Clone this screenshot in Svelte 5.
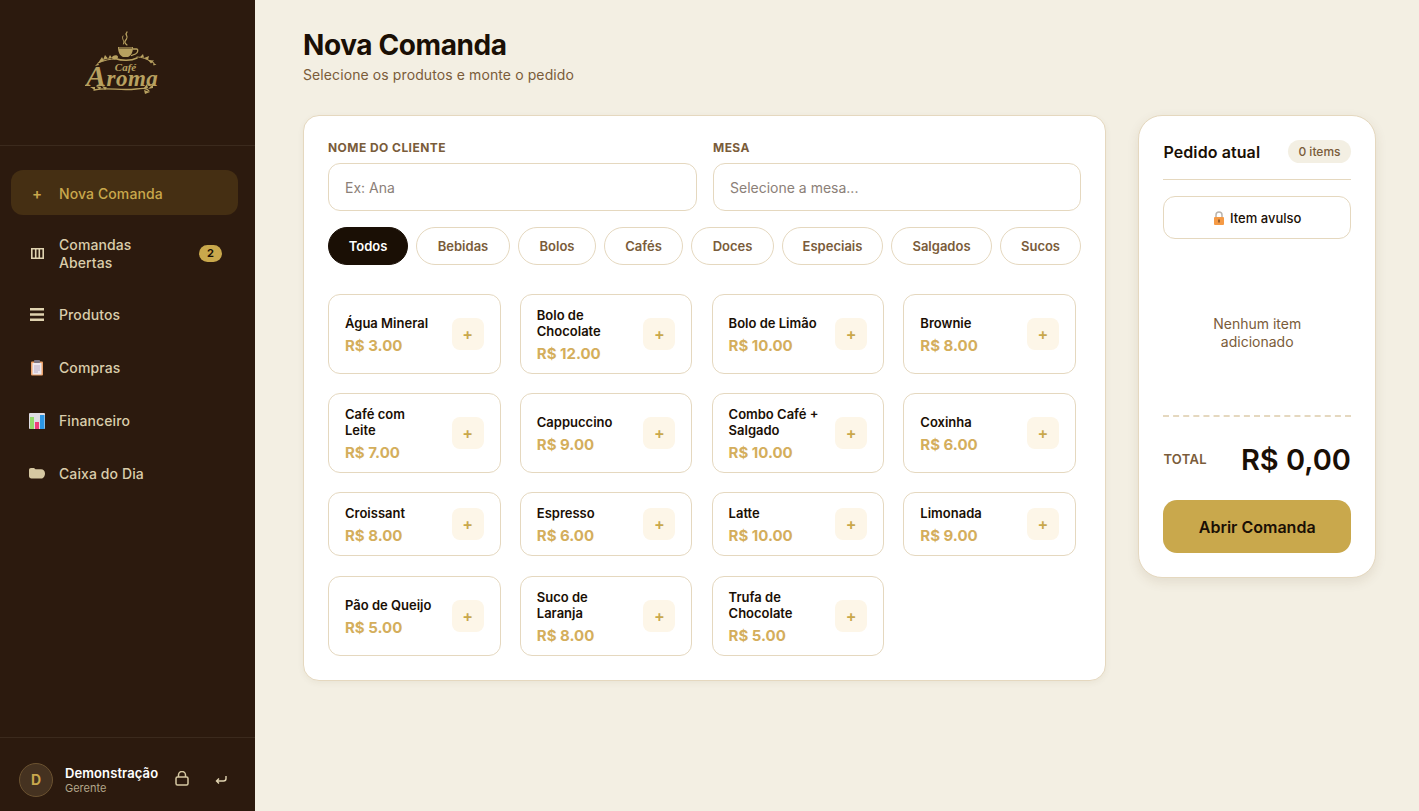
<script lang="ts">
  const nav = [
    { label: 'Comandas Abertas', icon: 'columns', badge: 2 },
    { label: 'Produtos', icon: 'lines' },
    { label: 'Compras', icon: 'clipboard' },
    { label: 'Financeiro', icon: 'chart' },
    { label: 'Caixa do Dia', icon: 'folder' },
  ];

  const chips = ['Todos', 'Bebidas', 'Bolos', 'Cafés', 'Doces', 'Especiais', 'Salgados', 'Sucos'];

  const products = [
    { name: 'Água Mineral', price: 'R$ 3.00' },
    { name: 'Bolo de Chocolate', price: 'R$ 12.00' },
    { name: 'Bolo de Limão', price: 'R$ 10.00' },
    { name: 'Brownie', price: 'R$ 8.00' },
    { name: 'Café com Leite', price: 'R$ 7.00' },
    { name: 'Cappuccino', price: 'R$ 9.00' },
    { name: 'Combo Café + Salgado', price: 'R$ 10.00' },
    { name: 'Coxinha', price: 'R$ 6.00' },
    { name: 'Croissant', price: 'R$ 8.00' },
    { name: 'Espresso', price: 'R$ 6.00' },
    { name: 'Latte', price: 'R$ 10.00' },
    { name: 'Limonada', price: 'R$ 9.00' },
    { name: 'Pão de Queijo', price: 'R$ 5.00' },
    { name: 'Suco de Laranja', price: 'R$ 8.00' },
    { name: 'Trufa de Chocolate', price: 'R$ 5.00' },
  ];
</script>

<div class="app">
  <aside class="sidebar">
    <div class="brand">
      <svg class="logo" viewBox="0 0 74 66" width="74" height="66" aria-label="Café Aroma">
        <g fill="none" stroke="#b8a160" stroke-linecap="round">
          <path d="M42 2c-3 3 2 4-.5 7s-2 4 .5 6" stroke-width="1.200" />
          <path d="M38 6c-2 3 2 4 .5 8" stroke-width="1" />
          <path d="M48 19h3.500c2 0 1.500 4-1 5l-4 1.500" stroke-width="1.300" />
          <path d="M30 28.500c7 2.500 16 2.500 22-.5" stroke-width="1.500" />
          <path d="M30 29c-5 0-10 1-17 4M52 27c5 0 10 2 17 6" stroke-width="1" />
          <path d="M9 60c14-3 26 1 42-1 8-1 11-1 13 2" stroke-width="1.300" />
        </g>
        <g fill="#b8a160">
          <path d="M33 17h15c0 6-2.500 9-5 10h-5c-2.500-1-5-4-5-10z" />
          <path d="M13 33l4-6 2 4zM18 30l2-5 3 3.500zM23 29l2-4 2 3zM63 30l6 .5-3 3zM59 28l5-2-1 4zM55 27l3-3 1 3.500zM68 33l3.500 1.500-3 1zM13 33l-3 3 4-1z" />
          <path d="M28 26c2-1.500 5-1 5 1s-3 3-5 2-1-2 0-3z" />
          <path d="M10 60l-5-3 5 0zM15 60l-4-4 5 1zM20 60l-3-4 5 1.500zM58 59l4-5 1 4zM63 59l5-5 0 4zM59 60l6 2-5 2z" />
        </g>
        <path d="M34 18h13" stroke="#2c1a0e" stroke-width=".8" />
        <text x="40.500" y="41" class="logo-cafe" text-anchor="middle">Café</text>
        <text x="1" y="56" class="logo-aroma"><tspan class="logo-cap">A</tspan>roma</text>
      </svg>
    </div>

    <nav class="nav">
      <a class="nav-item active" href="#nova">
        <span class="nav-icon plus">+</span>
        <span class="nav-label">Nova Comanda</span>
      </a>
      {#each nav as item}
        <a class="nav-item" href="#item">
          <span class="nav-icon">
            {#if item.icon === 'columns'}
              <svg viewBox="0 0 13 11" width="13" height="11">
                <path d="M.8.800h11.400v9.400H.800zM4.700.800v9.400M8.300.800v9.400" fill="none" stroke="#e0d3b0" stroke-width="1.600" />
              </svg>
            {:else if item.icon === 'lines'}
              <svg viewBox="0 0 14 13" width="14" height="13">
                <path d="M0 1.200h14M0 6.500h14M0 11.800h14" fill="none" stroke="#e0d3b0" stroke-width="2.400" />
              </svg>
            {:else if item.icon === 'clipboard'}
              <svg viewBox="0 0 14 16" width="14" height="16">
                <rect x="1" y="1.500" width="12" height="14" rx="1" fill="#eda36b" />
                <rect x="2.500" y="3" width="9" height="11.500" fill="#eee8ee" />
                <rect x="4" y="0" width="6" height="3" rx=".8" fill="#7d7580" />
                <path d="M4 6h6M4 8h6M4 10h6M4 12h4" stroke="#b4a8c0" stroke-width=".9" />
              </svg>
            {:else if item.icon === 'chart'}
              <svg viewBox="0 0 16 16" width="16" height="16">
                <rect x="0" y="0" width="16" height="16" rx="1" fill="#dfdde4" />
                <rect x="1" y="4" width="4" height="12" fill="#93d96a" />
                <rect x="6" y="9" width="4" height="7" fill="#ee3e7c" />
                <rect x="11" y="2" width="4.500" height="14" fill="#2b97e6" />
              </svg>
            {:else}
              <svg viewBox="0 0 16 11" width="16" height="11">
                <path d="M0 2C0 .8.800 0 2 0h3l1.500 1.200H12c2.500 0 4 1.800 4 4.300s-1.500 5-3.500 5H2.500C1 10.500 0 9.500 0 8z" fill="#d6c8a2" />
              </svg>
            {/if}
          </span>
          <span class="nav-label">{item.label}</span>
          {#if item.badge}
            <span class="badge">{item.badge}</span>
          {/if}
        </a>
      {/each}
    </nav>

    <div class="user">
      <div class="avatar">D</div>
      <div class="user-info">
        <div class="user-name">Demonstração</div>
        <div class="user-role">Gerente</div>
      </div>
      <svg class="user-icon" viewBox="0 0 14 15" width="14" height="15">
        <path d="M3.500 6V4a3.500 3.500 0 0 1 7 0v2" fill="none" stroke="#d6c8a2" stroke-width="1.500" />
        <rect x="1" y="6" width="12" height="8" rx="1.500" fill="none" stroke="#d6c8a2" stroke-width="1.500" />
      </svg>
      <svg class="user-icon back" viewBox="0 0 12 10" width="12" height="10">
        <path d="M11 1v2.500c0 1.500-1 2.500-2.500 2.500H1.500M4 3.500 1.500 6 4 8.500" fill="none" stroke="#e0d3b0" stroke-width="1.400" />
      </svg>
    </div>
  </aside>

  <main class="main">
    <header class="page-head">
      <h1>Nova Comanda</h1>
      <p>Selecione os produtos e monte o pedido</p>
    </header>

    <div class="columns">
      <section class="card order-form">
        <div class="fields">
          <div class="field">
            <span class="field-label">NOME DO CLIENTE</span>
            <div class="input">Ex: Ana</div>
          </div>
          <div class="field">
            <span class="field-label">MESA</span>
            <div class="input">Selecione a mesa...</div>
          </div>
        </div>

        <div class="chips">
          {#each chips as chip, i}
            <button class="chip" class:on={i === 0}>{chip}</button>
          {/each}
        </div>

        <div class="products">
          {#each products as p}
            <div class="product">
              <div class="product-text">
                <div class="product-name">{p.name}</div>
                <div class="product-price">{p.price}</div>
              </div>
              <div class="add">+</div>
            </div>
          {/each}
        </div>
      </section>

      <section class="card summary">
        <div class="summary-head">
          <span class="summary-title">Pedido atual</span>
          <span class="pill">0 items</span>
        </div>
        <button class="loose">
          <svg viewBox="0 0 12 14" width="12" height="14">
            <path d="M3 6V4a3 3 0 0 1 6 0v2" fill="none" stroke="#b9b4ae" stroke-width="1.500" />
            <rect x="1" y="6" width="10" height="8" rx="1" fill="#f59a45" />
            <rect x="5.400" y="8.500" width="1.200" height="3" fill="#5e3a1e" />
          </svg>
          Item avulso
        </button>
        <div class="empty">Nenhum item<br />adicionado</div>
        <div class="total">
          <span class="total-label">TOTAL</span>
          <span class="total-value">R$ 0,00</span>
        </div>
        <button class="open">Abrir Comanda</button>
      </section>
    </div>
  </main>
</div>

<style>
  :global(body) {
    margin: 0;
    background: #f3efe3;
    font-family: "Inter", "Noto Sans", sans-serif;
  }

  .app {
    display: flex;
    height: 811px;
    overflow: hidden;
  }

  /* sidebar */
  .sidebar {
    width: 255px;
    flex-shrink: 0;
    background: #2c1a0e;
    display: flex;
    flex-direction: column;
    box-sizing: border-box;
  }

  .brand {
    height: 146px;
    box-sizing: border-box;
    border-bottom: 1px solid #3b2a1d;
    display: flex;
    justify-content: flex-start;
    padding: 30px 0 0 85px;
  }

  .logo {
    display: block;
  }

  .logo-cafe {
    font: italic 700 11px "Liberation Serif", serif;
    fill: #b8a160;
  }

  .logo-aroma {
    font: italic 700 23px "Liberation Serif", serif;
    fill: #b8a160;
    letter-spacing: 0.5px;
  }

  .logo-cap {
    font-size: 30px;
  }

  .nav {
    flex: 1;
    display: flex;
    flex-direction: column;
    gap: 8px;
    padding: 24px 17px 0 11px;
  }

  .nav-item {
    display: flex;
    align-items: center;
    gap: 14px;
    min-height: 45px;
    box-sizing: border-box;
    padding: 12.500px 16px 12.500px 18px;
    border-radius: 12px;
    color: #dacdab;
    text-decoration: none;
    font-size: 14px;
    line-height: 18px;
    font-weight: 500;
    letter-spacing: 0.1px;
  }

  .nav-item.active {
    background: #452f13;
    color: #c9a84c;
    padding-top: 14px;
    padding-bottom: 12px;
  }

  .nav-icon {
    width: 16px;
    flex-shrink: 0;
    display: flex;
    justify-content: center;
    align-items: center;
  }

  .nav-icon svg {
    display: block;
  }

  .plus {
    font-size: 15px;
    font-weight: 600;
  }

  .nav-label {
    flex: 1;
    max-width: 110px;
  }

  .badge {
    margin-left: auto;
    background: #c9a84c;
    color: #1a0f05;
    font-size: 11px;
    font-weight: 700;
    line-height: 17px;
    width: 23px;
    text-align: center;
    border-radius: 9px;
  }

  .user {
    height: 74px;
    box-sizing: border-box;
    border-top: 1px solid #3b2a1d;
    display: flex;
    align-items: center;
    padding: 10px 0 0 19px;
    flex-shrink: 0;
  }

  .avatar {
    width: 34px;
    height: 34px;
    box-sizing: border-box;
    border-radius: 50%;
    background: #453220;
    border: 1px solid #6b5230;
    color: #c9a84c;
    font-size: 14px;
    font-weight: 700;
    display: flex;
    align-items: center;
    justify-content: center;
  }

  .user-info {
    margin: 2px 0 0 12px;
    width: 110px;
  }

  .user-name {
    color: #fff;
    font-size: 13px;
    line-height: 15px;
    font-weight: 600;
    white-space: nowrap;
    letter-spacing: 0.1px;
  }

  .user-role {
    color: #b3a68a;
    font-size: 11px;
    line-height: 14px;
  }

  .user-icon {
    display: block;
    margin-bottom: 2px;
  }

  .user-icon.back {
    margin: 0 0 0 26px;
  }

  /* main */
  .main {
    flex: 1;
    padding: 28px 43px 0 48px;
    min-width: 0;
  }

  .page-head {
    height: 87px;
  }

  h1 {
    margin: 0;
    font-size: 28px;
    line-height: 34px;
    font-weight: 700;
    color: #1a0f05;
    letter-spacing: -0.4px;
  }

  .page-head p {
    margin: 4px 0 0;
    font-size: 14px;
    line-height: 18px;
    color: #7a5c3a;
    letter-spacing: 0.1px;
  }

  .columns {
    display: flex;
    align-items: flex-start;
    gap: 32.400px;
  }

  .card {
    background: #fff;
    border: 1px solid #e5d8bf;
    box-sizing: border-box;
    border-radius: 16px;
  }

  .order-form {
    width: 803px;
    flex-shrink: 0;
    padding: 24px;
    box-shadow: 0 2px 6px rgba(90, 60, 20, 0.06);
  }

  .fields {
    display: grid;
    grid-template-columns: 369px 368px;
    gap: 16px;
  }

  .field-label {
    display: block;
    font-size: 12px;
    line-height: 16px;
    font-weight: 700;
    color: #7a5c3a;
    letter-spacing: 0.45px;
    margin-bottom: 7px;
  }

  .input {
    height: 48px;
    box-sizing: border-box;
    border: 1px solid #e5d8bf;
    border-radius: 12px;
    padding: 0 16px;
    display: flex;
    align-items: center;
    font-size: 14px;
    color: #8b8078;
  }

  .chips {
    display: grid;
    grid-template-columns: 80px 94px 78px 79px 83px 101px 101px 81px;
    gap: 8px;
    margin-top: 16px;
  }

  .chip {
    height: 38px;
    padding: 0;
    border: 1px solid #e5d8bf;
    border-radius: 19px;
    background: #fff;
    font: 600 13px "Inter", "Noto Sans", sans-serif;
    color: #7a5c3a;
  }

  .chip.on {
    background: #1a0f05;
    border-color: #1a0f05;
    color: #fff;
  }

  .products {
    display: grid;
    grid-template-columns: repeat(4, 172.600px);
    gap: 19.200px;
    margin-top: 29px;
  }

  .product {
    display: flex;
    align-items: center;
    justify-content: space-between;
    gap: 8px;
    box-sizing: border-box;
    border: 1px solid #e5d8bf;
    border-radius: 12px;
    padding: 10px 16px;
  }

  .product-text {
    min-width: 0;
    max-width: 91px;
    flex: 1;
    padding-top: 2px;
  }

  .product-name {
    font-size: 13px;
    line-height: 16px;
    font-weight: 600;
    color: #1a0f05;
  }

  .product-price {
    margin-top: 5px;
    font-size: 15px;
    line-height: 19px;
    font-weight: 700;
    color: #d4ae5c;
  }

  .add {
    width: 32px;
    height: 32px;
    flex-shrink: 0;
    border-radius: 8px;
    background: #fdf6e8;
    color: #c9a84c;
    font-size: 16px;
    font-weight: 600;
    display: flex;
    align-items: center;
    justify-content: center;
  }

  .summary {
    width: 237.600px;
    flex-shrink: 0;
    padding: 24px;
    border-radius: 24px;
    box-shadow: 0 4px 12px rgba(90, 60, 20, 0.1);
    display: flex;
    flex-direction: column;
  }

  .summary-head {
    display: flex;
    align-items: center;
    justify-content: space-between;
    padding-bottom: 16px;
    height: 23px;
    box-sizing: content-box;
    border-bottom: 1px solid #e5d8bf;
  }

  .summary-title {
    font-size: 16px;
    font-weight: 600;
    color: #1a0f05;
    letter-spacing: 0.1px;
  }

  .pill {
    width: 63px;
    line-height: 23px;
    text-align: center;
    border-radius: 12px;
    background: #f3efe3;
    color: #7a5c3a;
    font-size: 12px;
    font-weight: 500;
  }

  .loose {
    height: 43px;
    margin-top: 16px;
    border: 1px solid #e5d8bf;
    border-radius: 12px;
    background: #fff;
    font: 500 13px "Inter", "Noto Sans", sans-serif;
    color: #1a0f05;
    display: flex;
    align-items: center;
    justify-content: center;
    gap: 5px;
  }

  .empty {
    height: 178px;
    box-sizing: border-box;
    border-bottom: 2px dashed #e5d8bf;
    display: flex;
    flex-direction: column;
    justify-content: center;
    text-align: center;
    font-size: 14px;
    line-height: 18px;
    color: #7a5c3a;
    padding-top: 12px;
  }

  .total {
    display: flex;
    align-items: center;
    justify-content: space-between;
    margin-top: 23px;
    height: 38px;
  }

  .total-label {
    font-size: 13px;
    font-weight: 600;
    color: #7a5c3a;
    letter-spacing: 0.3px;
  }

  .total-value {
    font-size: 29px;
    font-weight: 600;
    color: #1a0f05;
  }

  .open {
    height: 53px;
    margin-top: 22px;
    border: 0;
    border-radius: 14px;
    background: #c9a84c;
    color: #1a0f05;
    font: 600 16px "Inter", "Noto Sans", sans-serif;
  }
</style>
